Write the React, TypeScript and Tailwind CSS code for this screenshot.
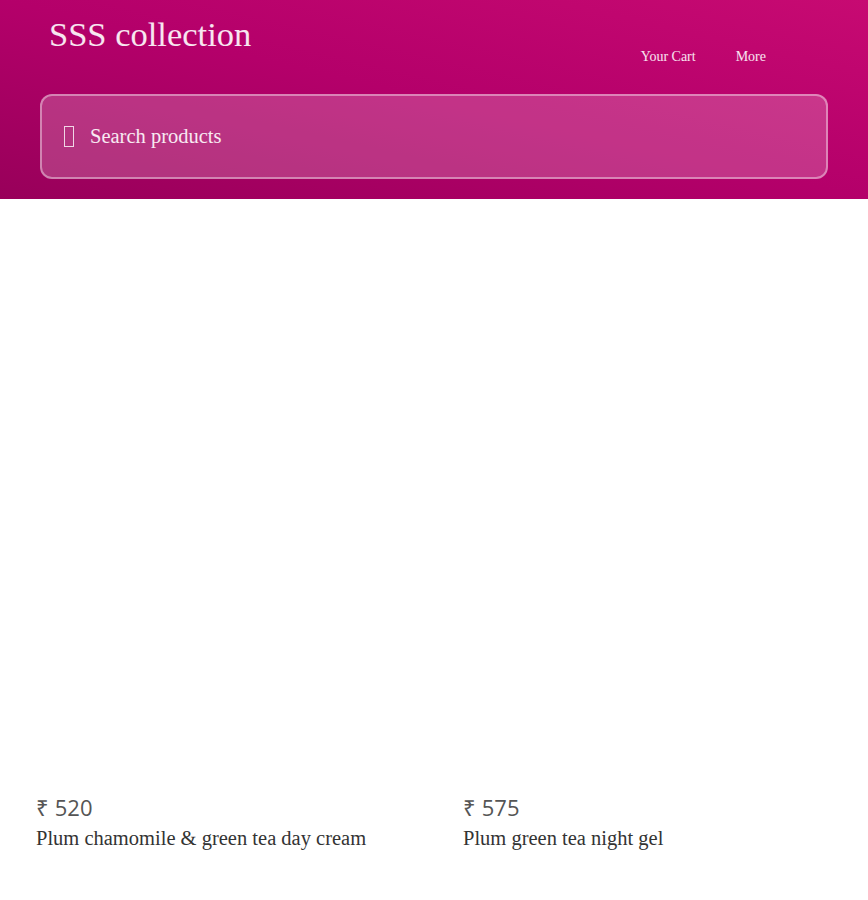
import React from 'react';

const products = [
  { price: 520, name: 'Plum chamomile & green tea day cream' },
  { price: 575, name: 'Plum green tea night gel' },
];

export default function App() {
  return (
    <div className="min-h-[900px] bg-white font-['Liberation_Serif',serif]">
      <header className="h-[199px] bg-gradient-to-tr from-[#98005a] via-[#b4006a] to-[#c70a72] px-10 pt-[14px]">
        <div className="flex items-start justify-between">
          <h1 className="pl-[9px] text-[34.5px] leading-[40px] text-white/90">SSS collection</h1>
          <nav className="mr-[62px] mt-[32px] flex gap-10 text-[14px] text-white/90">
            <a>Your Cart</a>
            <a>More</a>
          </nav>
        </div>
        <div className="mt-[27px] flex h-[85px] items-center gap-4 rounded-xl border-2 border-white/40 bg-white/20 pl-[22px]">
          <span className="h-[21px] w-[10px] border-[1.5px] border-white/80" />
          <span className="text-[20.5px] text-white/90">Search products</span>
        </div>
      </header>
      <main className="grid grid-cols-[427px_1fr] px-9 pt-[594px]">
        {products.map((p) => (
          <div key={p.name}>
            <div className="font-['Open_Sans',sans-serif] text-[22px] leading-[28px] text-[#555]">
              ₹ {p.price}
            </div>
            <div className="mt-[4px] text-[20.5px] leading-[26px] text-[#333]">{p.name}</div>
          </div>
        ))}
      </main>
    </div>
  );
}
